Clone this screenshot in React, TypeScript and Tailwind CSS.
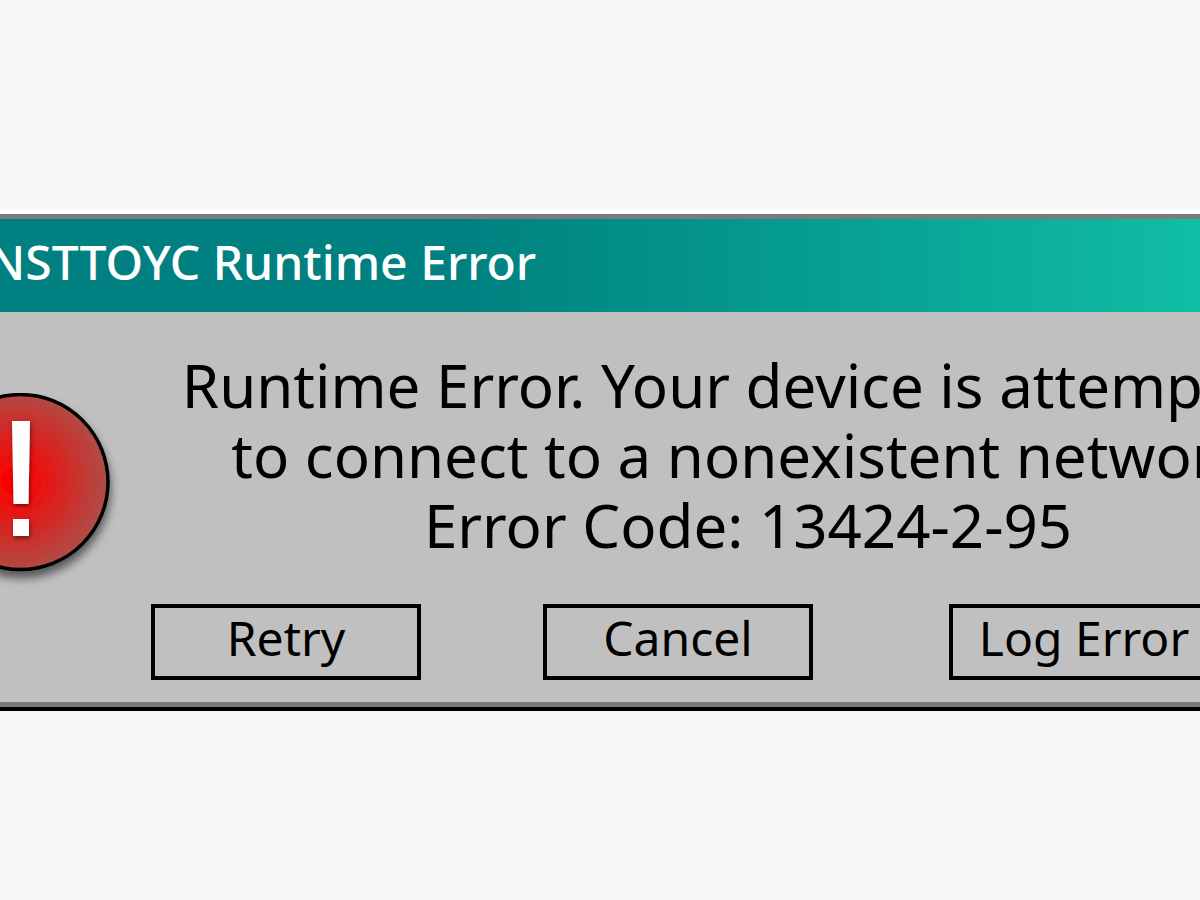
import type { ReactNode } from 'react';

interface DialogButtonProps {
  children: ReactNode;
  className?: string;
}

function DialogButton({ children, className = '' }: DialogButtonProps) {
  return (
    <button
      type="button"
      className={`w-[270px] h-[76px] shrink-0 border-4 border-black pb-2 text-[48px] leading-[60px] whitespace-nowrap ${className}`}
    >
      {children}
    </button>
  );
}

function ErrorIcon() {
  return (
    <svg viewBox="0 0 200 210" className="w-[200px] h-[210px] shrink-0" aria-hidden="true">
      <defs>
        <radialGradient id="ball" gradientUnits="userSpaceOnUse" cx="84" cy="88" r="98">
          <stop offset="0" stopColor="#ff0000" />
          <stop offset="0.1" stopColor="#fa0302" />
          <stop offset="1" stopColor="#a9524c" />
        </radialGradient>
        <filter id="ballShadow" x="-20%" y="-20%" width="140%" height="150%">
          <feDropShadow dx="1" dy="7" stdDeviation="5" floodColor="#000" floodOpacity="0.55" />
        </filter>
        <filter id="markShadow" x="-50%" y="-20%" width="200%" height="140%">
          <feDropShadow dx="1" dy="2" stdDeviation="2" floodColor="#000" floodOpacity="0.5" />
        </filter>
      </defs>
      <circle cx="89.5" cy="89" r="87.5" fill="url(#ball)" stroke="#000" strokeWidth="3.5" filter="url(#ballShadow)" />
      <g fill="#fff" filter="url(#markShadow)">
        <path d="M81 28h18l-1.5 83h-15z" />
        <rect x="82" y="126" width="16" height="17" />
      </g>
    </svg>
  );
}

export default function App() {
  return (
    <main className="min-h-screen overflow-hidden bg-[#f6f6f6] pt-[210px] font-['Noto_Sans','Open_Sans',sans-serif] text-black">
      <section
        role="alertdialog"
        aria-labelledby="dialog-title"
        aria-describedby="dialog-message"
        className="-mx-[145px] border-t-4 border-b-4 border-t-white border-b-black bg-[#c0c0c0]"
      >
        <div className="border-t-[5px] border-b-[5px] border-[#7b7b7b]">
          {/* Title bar */}
          <header className="h-[93px] bg-linear-to-r from-[#008080] from-40% to-[#12c2a7] to-94% pl-[133px]">
            <h1 id="dialog-title" className="text-[48px] leading-[86px] font-medium whitespace-nowrap text-white">
              NSTTOYC Runtime Error
            </h1>
          </header>

          {/* Body */}
          <div className="flex h-[390px] pl-[76px]">
            <div className="mt-[81px] w-[220px]">
              <ErrorIcon />
            </div>
            <div className="flex-1 pt-[38px]">
              <p id="dialog-message" className="text-center text-[60px] leading-[70px] whitespace-nowrap">
                Runtime Error. Your device is attempting
                <br />
                to connect to a nonexistent network.
                <br />
                Error Code: 13424-2-95
              </p>
              <div className="mt-[44px] flex">
                <DialogButton>Retry</DialogButton>
                <DialogButton className="ml-[122px]">Cancel</DialogButton>
                <DialogButton className="ml-[136px]">Log Error</DialogButton>
              </div>
            </div>
          </div>
        </div>
      </section>
    </main>
  );
}
